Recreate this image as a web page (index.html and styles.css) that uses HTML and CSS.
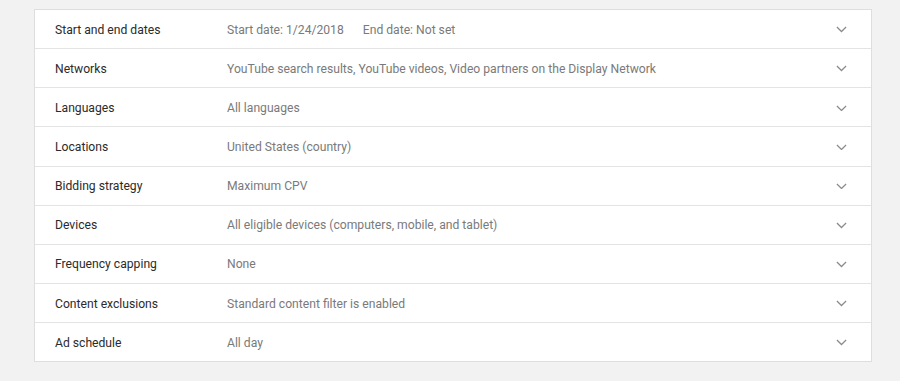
FILE: index.html
```html
<!DOCTYPE html>
<html lang="en">
<head>
    <meta charset="UTF-8">
    <title>Campaign settings</title>
    <link rel="stylesheet" href="styles.css">
</head>
<body>

    <div class="settings">
        <div class="row">
            <span class="label">Start and end dates</span>
            <span class="value"><span class="date">Start date: 1/24/2018</span><span>End date: Not set</span></span>
            <svg class="chevron" viewBox="0 0 12 7"><path d="M1 1 L6 6 L11 1"/></svg>
        </div>
        <div class="row">
            <span class="label">Networks</span>
            <span class="value">YouTube search results, YouTube videos, Video partners on the Display Network</span>
            <svg class="chevron" viewBox="0 0 12 7"><path d="M1 1 L6 6 L11 1"/></svg>
        </div>
        <div class="row">
            <span class="label">Languages</span>
            <span class="value">All languages</span>
            <svg class="chevron" viewBox="0 0 12 7"><path d="M1 1 L6 6 L11 1"/></svg>
        </div>
        <div class="row">
            <span class="label">Locations</span>
            <span class="value">United States (country)</span>
            <svg class="chevron" viewBox="0 0 12 7"><path d="M1 1 L6 6 L11 1"/></svg>
        </div>
        <div class="row">
            <span class="label">Bidding strategy</span>
            <span class="value">Maximum CPV</span>
            <svg class="chevron" viewBox="0 0 12 7"><path d="M1 1 L6 6 L11 1"/></svg>
        </div>
        <div class="row">
            <span class="label">Devices</span>
            <span class="value">All eligible devices (computers, mobile, and tablet)</span>
            <svg class="chevron" viewBox="0 0 12 7"><path d="M1 1 L6 6 L11 1"/></svg>
        </div>
        <div class="row">
            <span class="label">Frequency capping</span>
            <span class="value">None</span>
            <svg class="chevron" viewBox="0 0 12 7"><path d="M1 1 L6 6 L11 1"/></svg>
        </div>
        <div class="row">
            <span class="label">Content exclusions</span>
            <span class="value">Standard content filter is enabled</span>
            <svg class="chevron" viewBox="0 0 12 7"><path d="M1 1 L6 6 L11 1"/></svg>
        </div>
        <div class="row">
            <span class="label">Ad schedule</span>
            <span class="value">All day</span>
            <svg class="chevron" viewBox="0 0 12 7"><path d="M1 1 L6 6 L11 1"/></svg>
        </div>
    </div>

</body>
</html>
```

FILE: styles.css
```css
body {
    margin: 0;
    padding: 9px 28px 0 34px;
    background: #f2f2f2;
    font-family: Roboto, "Liberation Sans", sans-serif;
    font-size: 12.15px;
}

.settings {
    background: #ffffff;
    border: 1px solid #dedede;
}

.row {
    display: flex;
    align-items: center;
    height: 37.15px;
    padding: 1px 24px 0 20px;
    border-bottom: 1px solid #e3e3e3;
}

.row:last-child {
    border-bottom: none;
}

.label {
    width: 172px;
    color: #2b2b2b;
}

.value {
    flex: 1;
    color: #7a7a7a;
}

.date {
    margin-right: 19px;
}

.chevron {
    width: 11px;
    height: 6.5px;
    fill: none;
    stroke: #8a8a8a;
    stroke-width: 1.3;
}
```
